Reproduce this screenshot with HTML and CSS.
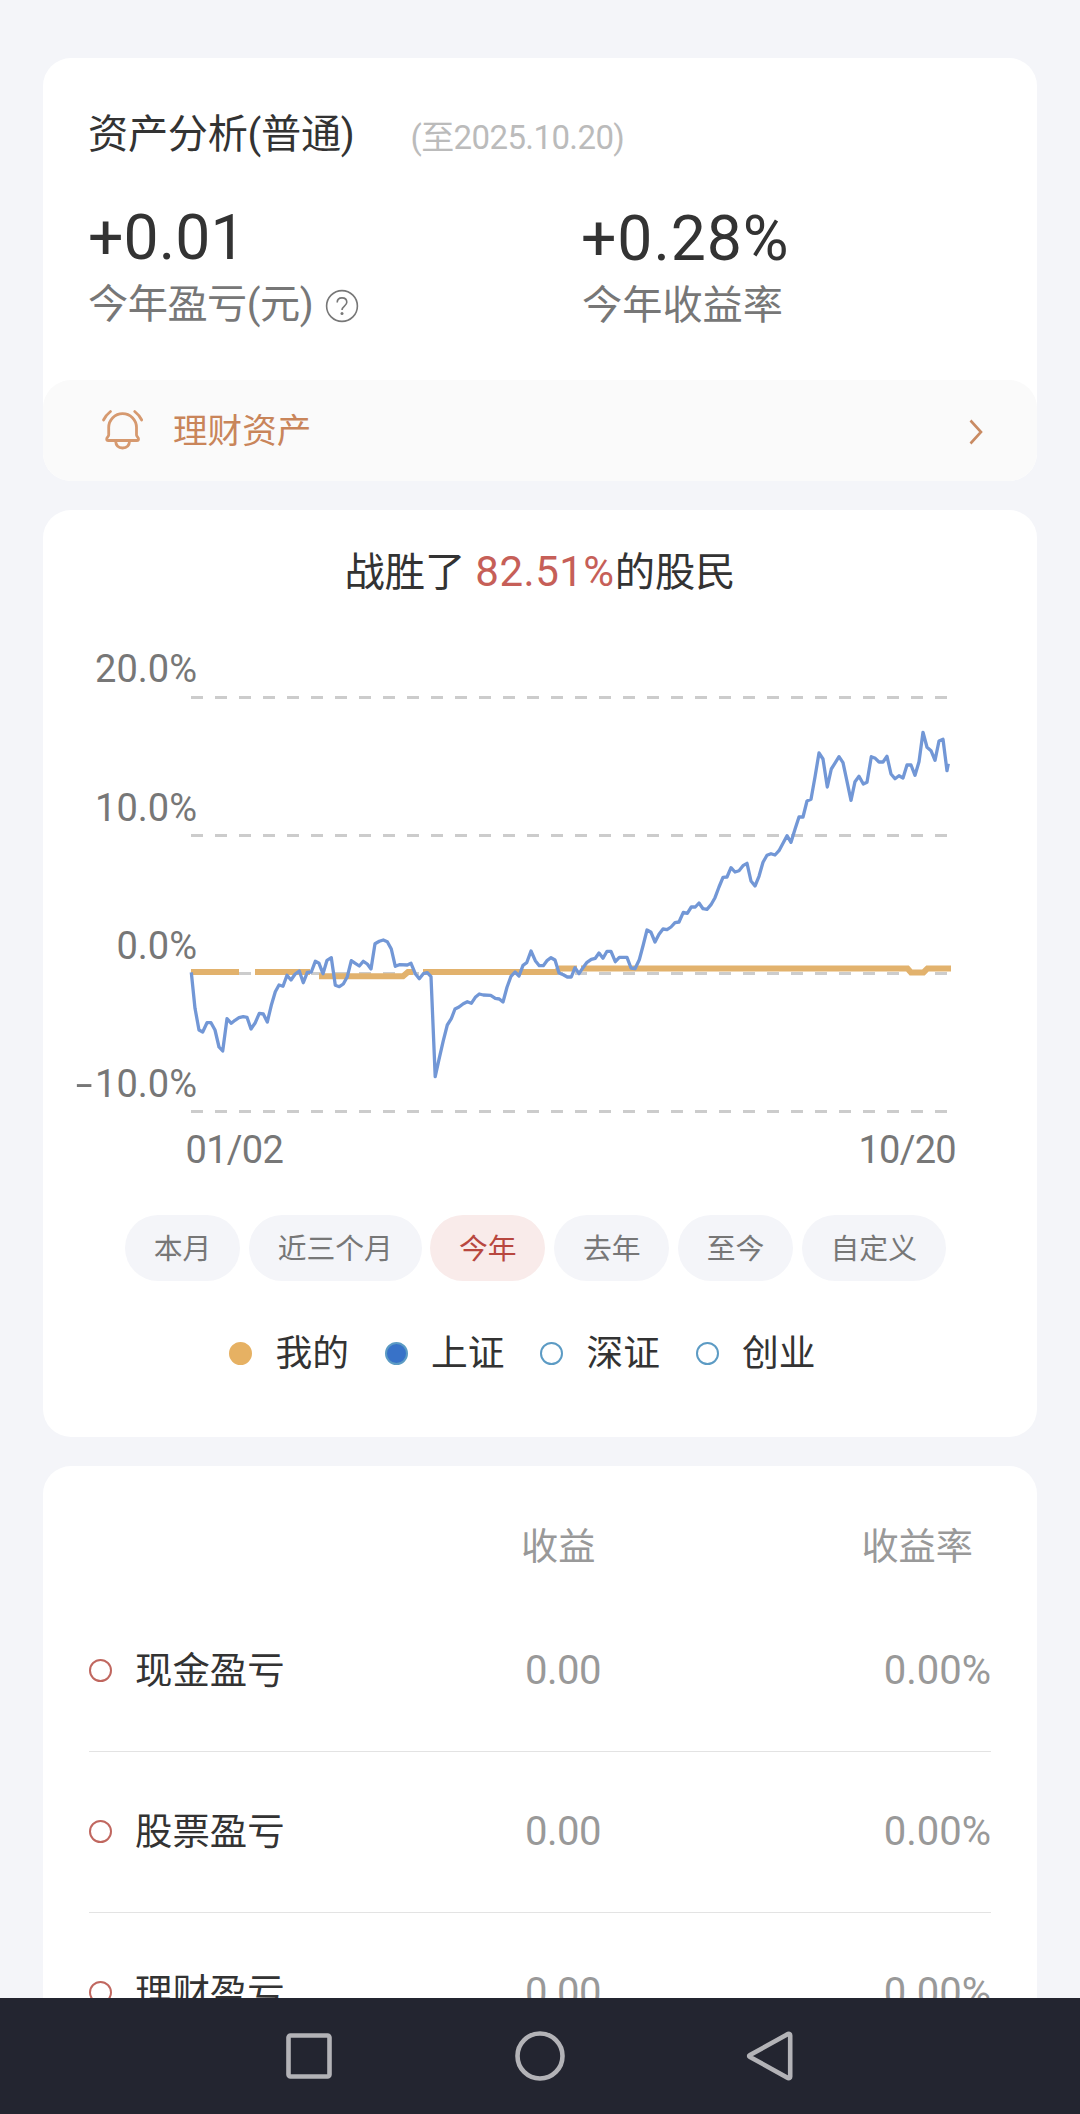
FILE: index.html
```html
<!DOCTYPE html>
<html lang="zh-CN">
<head>
<meta charset="utf-8">
<title>资产分析</title>
<link rel="stylesheet" href="styles.css">
</head>
<body>
<main class="page">
  <section class="card summary">
    <header class="summary-head">
      <h1 class="title">资产分析(普通)</h1>
      <span class="date">(至2025.10.20)</span>
    </header>
    <div class="metrics">
      <div class="metric">
        <div class="value">+0.01</div>
        <div class="label"><span class="label-text">今年盈亏(元)</span>
          <svg class="help" width="34" height="34" viewBox="0 0 34 34"><circle cx="17" cy="17" r="15.4"/><path d="M12.200 13.600c0-2.900 2-4.700 4.800-4.700s4.800 1.800 4.800 4.400c0 3.600-4.800 3.900-4.800 7.600"/><circle class="dot" cx="17" cy="24.600" r="1.500"/></svg>
        </div>
      </div>
      <div class="metric metric-rate">
        <div class="value">+0.28%</div>
        <div class="label">今年收益率</div>
      </div>
    </div>
    <a class="wealth">
      <svg class="bell" width="44" height="42" viewBox="0 0 44 42"><path d="M8.700 26V18.500a13.900 13.900 0 0 1 27.800 0V26c0 1.500 2 2.200 2 4 0 1-.5 1.500-1.500 1.500H8.200c-1 0-1.500-.5-1.500-1.500 0-1.800 2-2.500 2-4"/><path d="M15.600 32c.3 4.500 3 7 7 7s6.700-2.500 7-7"/><path d="M3.500 11Q6 6 10.500 2.500M41.700 11Q39.200 6 34.700 2.500"/></svg>
      <span class="wealth-text">理财资产</span>
      <svg class="chevron" width="14" height="26" viewBox="0 0 14 26"><path d="M1.500 1.500 12 13 1.500 24.500"/></svg>
    </a>
  </section>

  <section class="card trend">
    <h2 class="beat">战胜了 <span class="beat-rate">82.51%</span>的股民</h2>
    <svg class="chart" width="994" height="550" viewBox="43 630 994 550">
      <g class="grid">
        <path d="M191 697.500H948"/><path d="M191 835.500H948"/><path d="M191 973.500H948"/><path d="M191 1111.500H948"/>
      </g>
      <g class="axis" text-anchor="end">
        <text x="197" y="682">20.0%</text>
        <text x="197" y="820.500">10.0%</text>
        <text x="197" y="959">0.0%</text>
        <text x="197" y="1097">10.0%</text>
        <text transform="translate(92.500 1097) scale(1.600 1)">-</text>
      </g>
      <g class="axis dates">
        <text x="185.500" y="1163">01/02</text>
        <text x="956" y="1163" text-anchor="end">10/20</text>
      </g>
      <path class="mine" d="M191 972H239M255 972H310M319 976.300H403L408 972H413M423 972H556L560 968.400H577M581 968.400H907.500L911 972.400H923.500L927.500 968.400H951"/>
      <polyline class="index" points="191.300,972.300 195,1008.300 199,1030 202.700,1032 207,1022.700 211,1022.700 215,1030 219,1047 222.700,1051 227,1018.700 231.300,1023.300 235,1020.300 239,1017.700 243.300,1016.700 247,1017.300 251,1029 255.300,1022.700 259.300,1013.300 263.300,1014 267.300,1022 271.300,1005.300 275.300,991.700 279,985 283,986.300 287,975.300 291,980 295,974.300 299.300,971 303.300,982.700 307.300,972.300 311.300,972 315.300,961.300 319,963.300 323,973.700 327,960.300 331.300,957.700 335.300,985.300 339.300,986.700 343.300,984 347.300,976.700 351.300,960.700 355.300,963.300 359.300,966 363.300,961.300 367.300,964 371,969 375,943.700 379.300,941.300 383.300,940 387.300,941.700 391.300,949 395.300,966.300 399.300,964.700 407.300,965 411,963.300 415.300,973.700 419.300,978.700 423.300,973.700 427.300,972.700 431,976.700 435.200,1076.700 439,1059.300 443.300,1040.700 447.300,1025 451.300,1018.700 455,1009 459,1007 463.300,1003.700 467.300,1001.700 471.300,1003.300 475.300,997.300 479.300,994 483.300,995 490.700,995.300 495.300,998.300 499.300,999 503,1002 507,987.300 511,976.300 515,972 519,976 523,965.300 526.700,962.700 531,951 535.300,960.700 539.300,965.700 543.300,965.700 547.300,960.300 551,957.700 555,960 559,973 563.300,974.700 567.300,977 571.300,977 575,967.700 579,973.700 583,967.700 587,962.300 591.300,959.300 595.300,958.300 599,953 603,958.300 607,951.300 611,951.300 615.300,961.700 619.300,957.300 627,957.300 631,968 635,968.700 639.300,959.700 643.300,944.700 647,930 651,932.300 655,942 659,934.300 663,929 667,929.700 671,927 675,922.700 679,922 683.300,912.300 687.300,913.300 691.300,907 695.300,907 699,903 703,908.700 707,909.300 711,904.700 715,897.700 719,887 723,877.300 727,877 731,867.700 735,872 739,870.700 743,865.700 747,863.300 751,881 755,886 759,876.300 763,862.300 767,855.300 771,853.700 775,855 779,850.700 787,835.700 791,842.300 795,829.300 799,817 803,817 807,801 811,799.300 815,777 819,753 823,759 827.300,787 831.300,769 835.300,762.700 839,756.700 843,762.700 847,781.300 851,800.300 855,781.700 859,776.300 863.300,784 867,782.300 871.300,756.700 875.300,758.300 879,762 883,762 887,756.300 891,774 895,778.700 899,775.700 903,778 907,765 911,765 915,775.300 919,761.700 923,732.300 927,747.300 931,750.700 935,760.300 939,741 943,739.300 947,770.700 948.300,763.700"/>
    </svg>
    <nav class="ranges">
      <button class="range">本月</button>
      <button class="range">近三个月</button>
      <button class="range active">今年</button>
      <button class="range">去年</button>
      <button class="range">至今</button>
      <button class="range">自定义</button>
    </nav>
    <ul class="legend">
      <li><i class="ring mine-ring"></i><span>我的</span></li>
      <li><i class="ring index-ring"></i><span>上证</span></li>
      <li><i class="ring"></i><span>深证</span></li>
      <li><i class="ring"></i><span>创业</span></li>
    </ul>
  </section>

  <section class="card details">
    <div class="row head"><span></span><span class="profit">收益</span><span class="rate">收益率</span></div>
    <div class="row"><span class="name"><i class="bullet"></i><span>现金盈亏</span></span><span class="profit">0.00</span><span class="rate">0.00%</span></div>
    <div class="row"><span class="name"><i class="bullet"></i><span>股票盈亏</span></span><span class="profit">0.00</span><span class="rate">0.00%</span></div>
    <div class="row"><span class="name"><i class="bullet"></i><span>理财盈亏</span></span><span class="profit">0.00</span><span class="rate">0.00%</span></div>
  </section>
</main>
<footer class="system-bar">
  <svg width="50" height="50" viewBox="0 0 50 50"><rect x="4.500" y="4.500" width="41" height="41" rx="2"/></svg>
  <svg width="50" height="50" viewBox="0 0 50 50"><circle cx="25" cy="25" r="22.500"/></svg>
  <svg width="50" height="50" viewBox="0 0 50 50"><path d="M4 24 42 3Q44.200 2.500 44.200 4.500V45.500Q44.200 47.500 42 47L4 26Q2.200 25 4 24Z"/></svg>
</footer>
</body>
</html>
```
FILE: styles.css
```css
* { box-sizing: border-box; margin: 0; padding: 0; }

body {
  display: flex;
  flex-direction: column;
  height: 2114px;
  overflow: hidden;
  background: #f4f5f9;
  color: #333;
  font-family: Roboto, "Noto Sans CJK SC", sans-serif;
}

svg { display: block; fill: none; flex: none; }

.page {
  display: flex;
  flex-direction: column;
  gap: 29px;
  height: 1998px;
  padding: 58px 43px 0;
  overflow: hidden;
}

.card {
  flex: none;
  border-radius: 28px;
  background: #fff;
}

/* Summary */
.summary { height: 423px; }

.summary-head {
  display: flex;
  align-items: flex-start;
  gap: 56px;
  height: 126px;
  padding: 45px 45px 0;
}

.title {
  font-size: 40.200px;
  font-weight: 400;
  line-height: 64px;
  letter-spacing: -0.300px;
}

.date {
  padding-top: 3px;
  color: #bbb;
  font-size: 33px;
  line-height: 64px;
  letter-spacing: -0.600px;
}

.metrics {
  display: grid;
  grid-template-columns: 494px 1fr;
  height: 196px;
  padding: 0 45px;
}

.value {
  font-size: 62.500px;
  line-height: 74px;
  padding-top: 17px;
  margin-bottom: 1px;
  letter-spacing: 0.100px;
}

.metric-rate { padding-top: 1px; }
.metric-rate .value { margin-left: -1px; letter-spacing: 0.900px; }

.label {
  display: flex;
  align-items: center;
  gap: 9px;
  color: #777;
  font-size: 40.200px;
  line-height: 58px;
}

.label-text { margin-right: 3px; letter-spacing: -0.500px; }

.help { stroke: #777; stroke-width: 1.600; margin-top: 2px; }
.help .dot { fill: #777; stroke: none; }

.wealth {
  display: flex;
  align-items: center;
  height: 101px;
  padding: 0 54px 0 57px;
  border-radius: 28px;
  background: #fafafa;
  color: #c9855a;
}

.bell { stroke: #d6996f; stroke-width: 2.800; stroke-linecap: round; margin-bottom: 1px; }

.wealth-text {
  flex: 1;
  margin-left: 29px;
  font-size: 34.600px;
  line-height: 50px;
}

.chevron { stroke: #c98b63; stroke-width: 2.600; margin-top: 3px; }

/* Trend */
.trend {
  display: flex;
  flex-direction: column;
  height: 927px;
}

.beat {
  height: 120px;
  padding-top: 32px;
  font-size: 40.300px;
  font-weight: 400;
  line-height: 60px;
  text-align: center;
}

.beat-rate { color: #c65f58; font-size: 42px; letter-spacing: 0.500px; }

.grid { stroke: #ccc; stroke-width: 3; stroke-dasharray: 12 12; }
.axis { fill: #777; font-size: 38px; }
.dates { letter-spacing: -0.700px; }
.mine { stroke: #e2b26d; stroke-width: 6; }
.index { stroke: #7297d6; stroke-width: 3.300; stroke-linejoin: round; }

.ranges {
  display: flex;
  gap: 8.640px;
  margin-top: 35px;
  padding-left: 82px;
}

.range {
  height: 66px;
  padding: 2px 28.800px 0;
  border: 0;
  border-radius: 33px;
  background: #f4f5f9;
  color: #777;
  font: 28.800px/64px Roboto, "Noto Sans CJK SC", sans-serif;
}

.range.active { background: #f9ebea; color: #b8473f; }

.legend {
  display: flex;
  gap: 35.500px;
  margin-top: 42px;
  padding-left: 186px;
  list-style: none;
}

.legend li {
  display: flex;
  align-items: center;
  gap: 23.500px;
  height: 60px;
  font-size: 36.750px;
  line-height: 58px;
}

.legend span { padding-top: 2px; }

.ring {
  width: 23px;
  height: 23px;
  border: 2px solid #5c9bc4;
  border-radius: 50%;
}

.mine-ring { border-color: #e6b163; background: #e6b163; }
.index-ring { background: #3872c8; }

/* Details */
.details {
  height: 700px;
  padding: 47px 46px 0;
}

.row {
  display: grid;
  grid-template-columns: 436px 1fr auto;
  align-items: center;
  height: 161px;
  border-bottom: 1.500px solid #e3e3e3;
  color: #999;
  font-size: 40px;
  line-height: 60px;
}

.row.head {
  height: 78px;
  align-items: start;
  padding-top: 4px;
  border: 0;
  font-size: 37.200px;
}

.head .profit { margin-left: -4px; }
.head .rate { padding-right: 18px; }

.profit { letter-spacing: -0.500px; }
.head .profit { letter-spacing: 0; }

.name {
  display: flex;
  align-items: center;
  gap: 23px;
  color: #333;
  font-size: 37.400px;
}

.bullet {
  width: 23px;
  height: 23px;
  margin-bottom: 2px;
  border: 2px solid #c0675f;
  border-radius: 50%;
}

/* System navigation */
.system-bar {
  display: flex;
  justify-content: center;
  gap: 181px;
  height: 116px;
  padding-top: 33px;
  background: #232530;
}

.system-bar svg { stroke: #b3b3b7; stroke-width: 4.600; }
```
